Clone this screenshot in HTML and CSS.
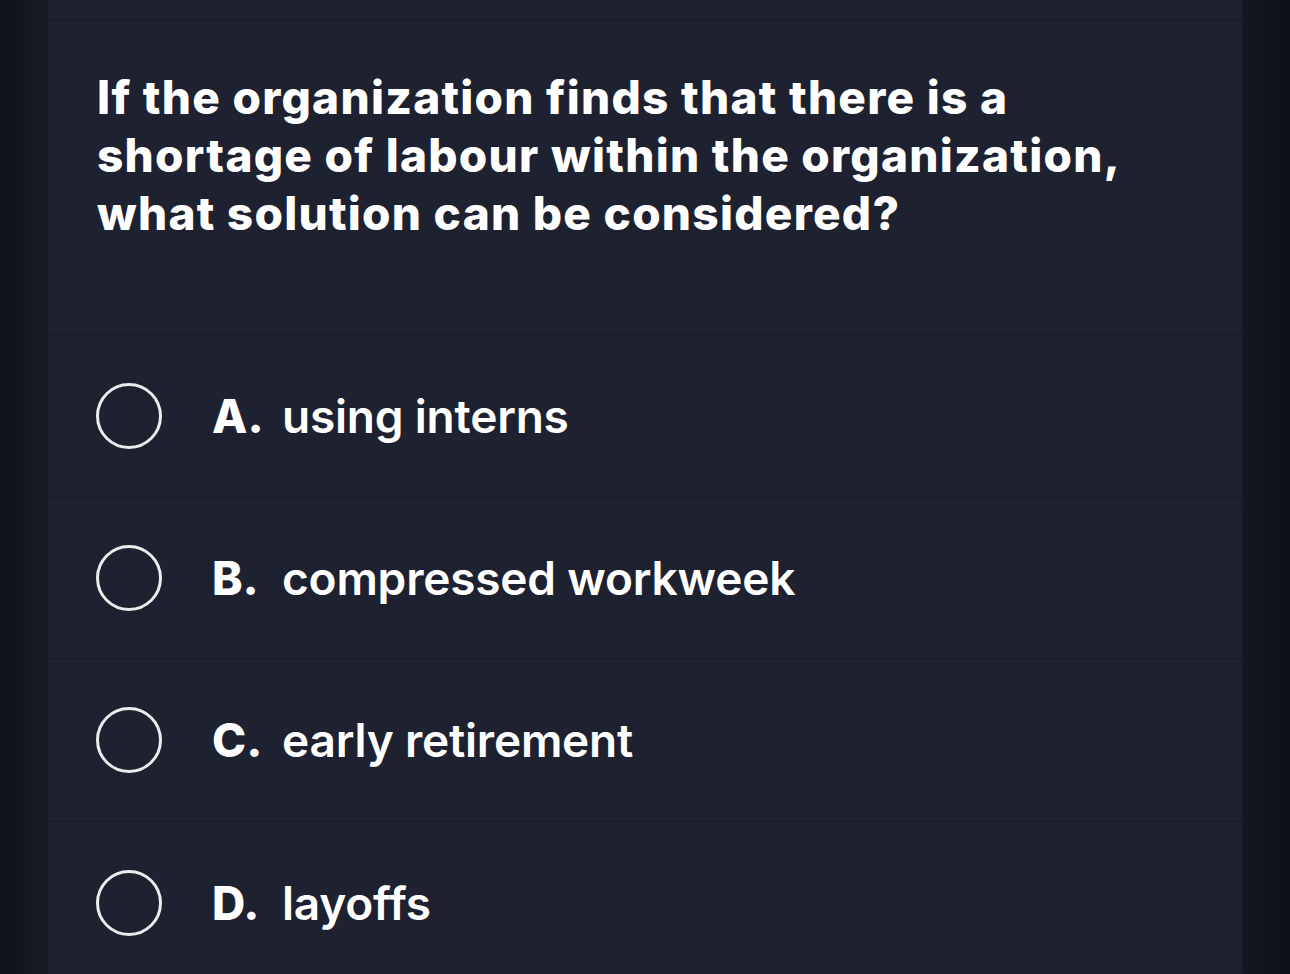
FILE: index.html
```html
<!DOCTYPE html>
<html>
<head>
<meta charset="utf-8">
<link rel="stylesheet" href="styles.css">
</head>
<body>
<div class="page">
  <div class="gutter gutter-left"></div>
  <main class="card">
    <div class="topbar"></div>
    <section class="question">
      <h1>If the organization finds that there is a shortage of labour within the organization, what solution can be considered?</h1>
    </section>
    <ul class="options">
      <li class="option"><span class="radio"></span><span class="letter">A.</span><span class="text">using interns</span></li>
      <li class="option"><span class="radio"></span><span class="letter">B.</span><span class="text">compressed workweek</span></li>
      <li class="option"><span class="radio"></span><span class="letter">C.</span><span class="text">early retirement</span></li>
      <li class="option"><span class="radio"></span><span class="letter">D.</span><span class="text">layoffs</span></li>
    </ul>
  </main>
  <div class="gutter gutter-right"></div>
</div>
</body>
</html>
```

FILE: styles.css
```css
* { box-sizing: border-box; }
html, body {
  margin: 0;
  padding: 0;
  height: 100%;
  background: #11141b;
  font-family: Inter, "Liberation Sans", sans-serif;
  color: #ffffff;
}
.page {
  display: flex;
  height: 974px;
  overflow: hidden;
}
.gutter {
  width: 48px;
  flex: none;
}
.gutter-left {
  background: linear-gradient(to right, #0f1219 0%, #131720 60%, #181c26 100%);
}
.gutter-right {
  background: linear-gradient(to right, #141822 0%, #10131a 60%, #0e1118 100%);
}
.card {
  flex: 1;
  background: #1d2130;
  display: flex;
  flex-direction: column;
}
.topbar {
  flex: none;
  height: 21px;
  border-bottom: 2px solid #1a1e29;
}
.question {
  flex: none;
  height: 315px;
  padding: 47px 60px 0 49px;
  border-bottom: 2px solid #1a1e29;
}
.question h1 {
  margin: 0;
  max-width: 1040px;
  font-size: 46px;
  line-height: 58px;
  font-weight: 800;
  letter-spacing: 1.25px;
  color: #ffffff;
}
.options {
  flex: none;
  list-style: none;
  margin: 0;
  padding: 0;
}
.option {
  height: 162px;
  display: flex;
  align-items: center;
  padding-left: 48px;
  border-bottom: 2px solid #1a1e29;
}
.option:last-child { border-bottom: none; }
.radio {
  width: 66px;
  height: 66px;
  border: 3px solid #ececec;
  border-radius: 50%;
  flex: none;
  margin-right: 50px;
}
.letter {
  width: 70px;
  flex: none;
  font-size: 46px;
  font-weight: 800;
}
.text {
  font-size: 46px;
  font-weight: 600;
  letter-spacing: -0.2px;
}
```
